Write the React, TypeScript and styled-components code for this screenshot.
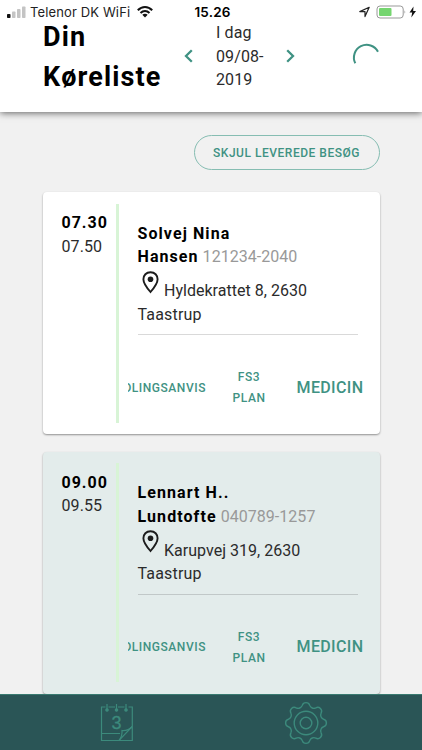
import React from "react";
import styled, { createGlobalStyle } from "styled-components";

const TEAL = "#3f9283";

const GlobalStyle = createGlobalStyle`
  * { box-sizing: border-box; }
  html, body, #root { height: 100%; }
  body {
    margin: 0;
    overflow: hidden;
    background: #f1f1f1;
    color: #2b2b2b;
    font-family: Roboto, "Liberation Sans", sans-serif;
  }
`;

const Screen = styled.div`
  width: 422px;
  height: 750px;
  display: flex;
  flex-direction: column;
  overflow: hidden;
`;

const Top = styled.div`
  height: 112px;
  flex: none;
  background: #fff;
  box-shadow: 0 1px 7px rgba(0, 0, 0, 0.6);
  z-index: 1;
`;

const StatusBar = styled.div`
  height: 24px;
  display: grid;
  grid-template-columns: 1fr 40px 1fr;
  align-items: center;
  padding: 0 5px 0 7px;
  font-family: Inter, sans-serif;
  font-size: 13px;
  color: #222;
`;

const StatusGroup = styled.div<{ $end?: boolean }>`
  display: flex;
  align-items: center;
  justify-content: ${(p) => (p.$end ? "flex-end" : "flex-start")};
  white-space: nowrap;
`;

const Carrier = styled.span`
  margin: 0 7px 0 4px;
  letter-spacing: 0.13px;
`;

const Clock = styled.span`
  font-weight: 600;
  font-size: 13.5px;
  letter-spacing: 0.2px;
  color: #000;
  text-align: center;
  padding-left: 1px;
`;

const Header = styled.header`
  height: 88px;
  display: grid;
  grid-template-columns: 141px 32px 70px 28px 1fr;
  padding-left: 43px;
`;

const Title = styled.h1`
  margin: -7px 0 0;
  font-size: 27px;
  line-height: 40px;
  letter-spacing: 1.1px;
  font-weight: 700;
  color: #000;
`;

const Arrow = styled.button`
  height: 64px;
  padding: 0;
  border: 0;
  background: none;
  color: ${TEAL};
  display: flex;
  align-items: center;
`;

const DateText = styled.div`
  margin-top: -3px;
  font-size: 16px;
  line-height: 23.6px;
  letter-spacing: 0.1px;
`;

const Spinner = styled.svg`
  margin: 17px 0 0 37px;
`;

const Content = styled.main`
  flex: 1;
  min-height: 0;
  padding: 23px 42.5px 0 42.5px;
  display: flex;
  flex-direction: column;
`;

const FilterButton = styled.button`
  align-self: flex-end;
  flex: none;
  width: 186px;
  height: 35px;
  margin-bottom: 22px;
  padding: 0;
  border: 1px solid #86bdb2;
  border-radius: 18px;
  background: transparent;
  color: ${TEAL};
  font: 500 12px Roboto, sans-serif;
  letter-spacing: 0.52px;
`;

const Card = styled.article<{ $tinted?: boolean }>`
  flex: none;
  width: 337px;
  height: 242px;
  margin-bottom: 17.5px;
  padding: 11.5px 0;
  display: grid;
  grid-template-columns: 73.5px 3px 1fr;
  grid-template-rows: 219px;
  border-radius: 4px;
  background: ${(p) => (p.$tinted ? "#e3eceb" : "#fff")};
  box-shadow: 0 1px 2px rgba(0, 0, 0, 0.4);
`;

const Times = styled.div`
  padding: 7.5px 0 0 19px;
  font-size: 16px;
  line-height: 23.6px;
  letter-spacing: 0.1px;
`;

const Start = styled.div`
  font-weight: 700;
  letter-spacing: 1px;
  color: #000;
`;

const Stripe = styled.div`
  background: #d8f4d6;
`;

const Visit = styled.div`
  display: flex;
  flex-direction: column;
  padding-left: 9px;
`;

const Person = styled.div`
  flex: none;
  width: 220px;
  height: 131.5px;
  margin-left: 9.5px;
  padding-top: 18px;
  border-bottom: 1px solid rgba(0, 0, 0, 0.15);
  font-size: 16px;
  line-height: 23.6px;
  white-space: nowrap;
`;

const Name = styled.strong`
  letter-spacing: 1.08px;
  color: #000;
`;

const Cpr = styled.span`
  color: #999;
  letter-spacing: 0.04px;
`;

const Address = styled.div`
  letter-spacing: 0.18px;
`;

const AddressLine = styled.div`
  height: 34px;
  display: flex;
  align-items: flex-end;
  letter-spacing: 0.02px;
`;

const Pin = styled.svg`
  align-self: flex-start;
  margin: 2px 5px 0 4.5px;
`;

const Actions = styled.div`
  flex: none;
  height: 86px;
  margin-top: 10px;
  display: grid;
  grid-template-columns: 78.5px 85px 77px;
  align-items: center;
`;

const Action = styled.button<{ $large?: boolean; $clipped?: boolean }>`
  min-width: 0;
  padding: 0;
  border: 0;
  background: none;
  overflow: hidden;
  display: flex;
  justify-content: ${(p) => (p.$clipped ? "flex-end" : "center")};
  margin-top: ${(p) => (p.$large ? "-2px" : "0")};
  white-space: nowrap;
  color: ${TEAL};
  font-family: Roboto, sans-serif;
  font-size: ${(p) => (p.$large ? "16px" : "12px")};
  font-weight: 500;
  line-height: 21px;
  letter-spacing: ${(p) => (p.$large ? "0.35px" : "0.55px")};
`;

const ClippedText = styled.span`
  margin-right: 0.5px;
`;

const TabBar = styled.nav`
  height: 56px;
  flex: none;
  z-index: 1;
  display: grid;
  grid-template-columns: 234px 144px;
  justify-items: center;
  align-items: center;
  border-top: 1px solid #397a70;
  background: #2a5556;
  color: #3c8a7c;
`;

const Signal = () => (
  <svg width="19" height="13" viewBox="0 0 19 13">
    <rect x="0" y="8" width="3.5" height="4" rx="0.8" fill="#111" />
    <rect x="5" y="5.5" width="3.5" height="6.5" rx="0.8" fill="#c4c4c4" />
    <rect x="10" y="3" width="3.5" height="9" rx="0.8" fill="#c4c4c4" />
    <rect x="15" y="0.5" width="3.5" height="11.5" rx="0.8" fill="#c4c4c4" />
  </svg>
);

const Wifi = () => (
  <svg width="16" height="12" viewBox="0 0 16 12" fill="none" stroke="#111" strokeWidth="2">
    <path d="M0.8 4.3C5-0.1 11-0.1 15.2 4.3M3.5 7C6.2 4.3 9.8 4.3 12.5 7" />
    <path d="M8 11.5L5.3 8.8Q8 6.6 10.7 8.8Z" fill="#111" stroke="none" />
  </svg>
);

const StatusIcons = () => (
  <svg width="58" height="16" viewBox="0 0 58 16">
    <path d="M0.8 7.6L10.2 3.3L6 12.6V7.6Z" fill="none" stroke="#222" strokeWidth="1.2" strokeLinejoin="round" />
    <rect x="18" y="2" width="26.2" height="12" rx="3" fill="#fff" stroke="#999" />
    <rect x="20" y="4" width="12.5" height="8" rx="1" fill="#75d56f" />
    <path d="M45.5 6.2Q47.2 8 45.5 9.8Z" fill="#999" />
    <path d="M54.5 2.5L50.5 8.6H53.2L52.3 13.5L57 7H54.2Z" fill="#111" />
  </svg>
);

const Chevron = ({ d }: { d: string }) => (
  <svg width="9" height="14" viewBox="0 0 9 14" fill="none" stroke="currentColor" strokeWidth="2.3">
    <path d={d} />
  </svg>
);

const CalendarIcon = () => (
  <svg width="34" height="40" viewBox="0 0 34 40" fill="none" stroke="currentColor" strokeWidth="1.2">
    <path d="M5.5 4H1.5V37.5H19L32.3 23.5V4H28.5M8.5 4H15M18 4H24.5M32.3 23.5V37.5H19M1.5 30.5H20" />
    <path d="M19 37.5Q22.5 33 22 27.5Q28 28 32.3 23.5" />
    <path d="M7 1V6M16.5 1V6M26 1V6" />
    <circle cx="7" cy="7" r="1.2" fill="currentColor" />
    <circle cx="16.5" cy="7" r="1.2" fill="currentColor" />
    <circle cx="26" cy="7" r="1.2" fill="currentColor" />
    <text x="16.5" y="25.8" textAnchor="middle" fill="currentColor" stroke="currentColor" strokeWidth="0.3" fontFamily="Liberation Sans, sans-serif" fontSize="18">3</text>
  </svg>
);

const polar = (deg: number, r: number) => {
  const a = (deg * Math.PI) / 180;
  return `${(22 + r * Math.cos(a)).toFixed(2)} ${(22 + r * Math.sin(a)).toFixed(2)}`;
};

const gearPath =
  `M${polar(-12, 18)}` +
  Array.from({ length: 8 }, (_, i) => {
    const a = i * 45;
    return `A3.9 3.9 0 0 1 ${polar(a + 12, 18)}A4.4 4.4 0 0 0 ${polar(a + 33, 18)}`;
  }).join("") +
  "Z";

const GearIcon = () => (
  <svg width="44" height="44" viewBox="0 0 44 44" fill="none" stroke="currentColor" strokeWidth="1.4">
    <path d={gearPath} />
    <circle cx="22" cy="22" r="11.8" />
    <circle cx="22" cy="22" r="5.8" />
  </svg>
);

type VisitData = {
  start: string;
  end: string;
  first: string;
  last: string;
  cpr: string;
  street: string;
  city: string;
  tinted?: boolean;
};

const visits: VisitData[] = [
  { start: "07.30", end: "07.50", first: "Solvej Nina", last: "Hansen", cpr: "121234-2040", street: "Hyldekrattet 8, 2630", city: "Taastrup" },
  { start: "09.00", end: "09.55", first: "Lennart H..", last: "Lundtofte", cpr: "040789-1257", street: "Karupvej 319, 2630", city: "Taastrup", tinted: true },
];

const VisitCard = ({ visit }: { visit: VisitData }) => (
  <Card $tinted={visit.tinted}>
    <Times>
      <Start>{visit.start}</Start>
      {visit.end}
    </Times>
    <Stripe />
    <Visit>
      <Person>
        <Name>{visit.first}</Name>
        <br />
        <Name>{visit.last}</Name> <Cpr>{visit.cpr}</Cpr>
        <Address>
          <AddressLine>
            <Pin width="17" height="23" viewBox="0 0 17 23">
              <path d="M8.5 1.2C4.2 1.2 1.4 4.3 1.4 8.2C1.4 12.8 8.5 21 8.5 21S15.6 12.8 15.6 8.2C15.6 4.3 12.8 1.2 8.5 1.2Z" fill="none" stroke="#1c1c1c" strokeWidth="1.9" />
              <circle cx="8.5" cy="8.3" r="2.8" fill="#1c1c1c" />
            </Pin>
            <span>{visit.street}</span>
          </AddressLine>
          {visit.city}
        </Address>
      </Person>
      <Actions>
        <Action $clipped>
          <ClippedText>HANDLINGSANVIS</ClippedText>
        </Action>
        <Action>
          <span>FS3<br />PLAN</span>
        </Action>
        <Action $large>MEDICIN</Action>
      </Actions>
    </Visit>
  </Card>
);

export default function App() {
  return (
    <Screen>
      <GlobalStyle />
      <Top>
        <StatusBar>
          <StatusGroup>
            <Signal />
            <Carrier>Telenor DK WiFi</Carrier>
            <Wifi />
          </StatusGroup>
          <Clock>15.26</Clock>
          <StatusGroup $end>
            <StatusIcons />
          </StatusGroup>
        </StatusBar>
        <Header>
          <Title>Din<br />Køreliste</Title>
          <Arrow aria-label="Forrige dag"><Chevron d="M7.8 1.2L2 7L7.8 12.8" /></Arrow>
          <DateText>I dag<br />09/08-<br />2019</DateText>
          <Arrow aria-label="Næste dag"><Chevron d="M1.2 1.2L7 7L1.2 12.8" /></Arrow>
          <Spinner width="30" height="30" viewBox="0 0 30 30" fill="none" stroke={TEAL} strokeWidth="2">
            <path d="M4.3 22.3A12.4 12.4 0 0 1 27 10.8" />
          </Spinner>
        </Header>
      </Top>
      <Content>
        <FilterButton>SKJUL LEVEREDE BESØG</FilterButton>
        {visits.map((v) => <VisitCard key={v.start} visit={v} />)}
      </Content>
      <TabBar>
        <CalendarIcon />
        <GearIcon />
      </TabBar>
    </Screen>
  );
}
